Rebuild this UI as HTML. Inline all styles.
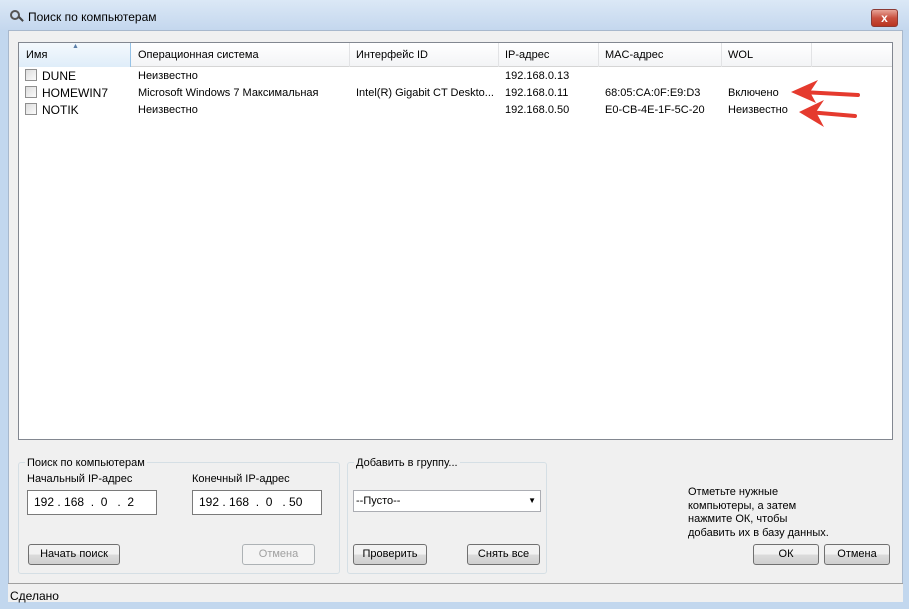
<!DOCTYPE html>
<html><head><meta charset="utf-8"><style>
*{margin:0;padding:0;box-sizing:border-box}
body{width:909px;height:609px;overflow:hidden;background:#c2d7ee;font-family:"Liberation Sans",sans-serif;font-size:11px;color:#000;position:relative}
.a{position:absolute;white-space:nowrap}
.title{left:0;top:0;width:909px;height:30px;background:linear-gradient(#dbe8f6,#c4d7ee)}
.client{left:8px;top:30px;width:895px;height:572px;background:#f0f0f0;border:1px solid #a8b8cc}
.list{left:18px;top:42px;width:875px;height:398px;background:#fff;border:1px solid #828790}
.hdr{left:19px;top:43px;width:873px;height:24px;background:linear-gradient(#fff,#f3f4f6);border-bottom:1px solid #d5d5d5}
.sep{top:43px;width:1px;height:24px;background:#e2e3e5}
.cb{width:12px;height:12px;border:1px solid #8f8f8f;background:linear-gradient(135deg,#ddd,#fbfbfb)}
.btn{height:21px;border:1px solid #707070;border-radius:3px;background:linear-gradient(#f2f2f2 50%,#dcdcdc 50%,#cfcfcf);text-align:center;line-height:19px;font-size:11px}
.grp{border:1px solid #d5dfe5;border-radius:3px}
.lg{background:#f0f0f0;padding:0 2px}
.ip{height:25px;background:#fff;border:1px solid #7a7a7a;font-size:12px;line-height:23px}
</style></head><body>
<div class="a title"></div>
<div class="a" style="left:10px;top:10px;width:10px;height:10px;border:2px solid #555;border-radius:50%"></div>
<div class="a" style="left:18px;top:18px;width:6px;height:2px;background:#444;transform:rotate(45deg)"></div>
<div class="a" style="left:28px;top:10px;font-size:12px">Поиск по компьютерам</div>
<div class="a" style="left:871px;top:9px;width:27px;height:18px;border:1px solid #8c3a34;border-radius:3px;background:linear-gradient(#e8a497,#c9503f 50%,#b93420);color:#fff;font-weight:bold;text-align:center;line-height:16px;font-size:12px">x</div>
<div class="a client"></div>
<div class="a list"></div>
<div class="a hdr"></div>
<div class="a" style="left:19px;top:43px;width:112px;height:24px;background:linear-gradient(#f4f9fd,#dfedf9);border-right:1px solid #96c2e6"></div>
<div class="a" style="left:72px;top:43px;font-size:7px;color:#5a7ea8">▲</div>
<div class="a sep" style="left:349px"></div><div class="a sep" style="left:498px"></div><div class="a sep" style="left:598px"></div><div class="a sep" style="left:721px"></div><div class="a sep" style="left:811px"></div>
<div class="a" style="left:26px;top:49px">Имя</div>
<div class="a" style="left:138px;top:49px">Операционная система</div>
<div class="a" style="left:356px;top:49px">Интерфейс ID</div>
<div class="a" style="left:505px;top:49px">IP-адрес</div>
<div class="a" style="left:605px;top:49px">MAC-адрес</div>
<div class="a" style="left:728px;top:49px">WOL</div>

<div class="a cb" style="left:25px;top:69px"></div><div class="a cb" style="left:25px;top:86px"></div><div class="a cb" style="left:25px;top:103px"></div>
<div class="a" style="left:42px;top:69px;font-size:12px">DUNE</div>
<div class="a" style="left:42px;top:86px;font-size:12px">HOMEWIN7</div>
<div class="a" style="left:42px;top:103px;font-size:12px">NOTIK</div>
<div class="a" style="left:138px;top:70px">Неизвестно</div>
<div class="a" style="left:138px;top:87px">Microsoft Windows 7 Максимальная</div>
<div class="a" style="left:138px;top:104px">Неизвестно</div>
<div class="a" style="left:356px;top:87px">Intel(R) Gigabit CT Deskto...</div>
<div class="a" style="left:505px;top:70px">192.168.0.13</div>
<div class="a" style="left:505px;top:87px">192.168.0.11</div>
<div class="a" style="left:505px;top:104px">192.168.0.50</div>
<div class="a" style="left:605px;top:87px">68:05:CA:0F:E9:D3</div>
<div class="a" style="left:605px;top:104px">E0-CB-4E-1F-5C-20</div>
<div class="a" style="left:728px;top:87px">Включено</div>
<div class="a" style="left:728px;top:104px">Неизвестно</div>
<svg class="a" style="left:780px;top:75px" width="90" height="60">
<path d="M78 20 L22 17" stroke="#e53a2e" stroke-width="4" stroke-linecap="round"/>
<path d="M11 17 L38 5 L30 17 L36 28 Z" fill="#e53a2e"/>
<path d="M75 41 L28 37" stroke="#e53a2e" stroke-width="4" stroke-linecap="round"/>
<path d="M19 37 L44 25 L36 37 L44 52 Z" fill="#e53a2e"/>
</svg>

<div class="a grp" style="left:18px;top:462px;width:322px;height:112px"></div>
<div class="a lg" style="left:25px;top:457px">Поиск по компьютерам</div>
<div class="a" style="left:27px;top:473px">Начальный IP-адрес</div>
<div class="a" style="left:192px;top:473px">Конечный IP-адрес</div>
<div class="a ip" style="left:27px;top:490px;width:130px;padding-left:6px">192 . 168 &nbsp;. &nbsp;0 &nbsp;&nbsp;. &nbsp;2</div>
<div class="a ip" style="left:192px;top:490px;width:130px;padding-left:6px">192 . 168 &nbsp;. &nbsp;0 &nbsp;&nbsp;. 50</div>
<div class="a btn" style="left:28px;top:544px;width:92px">Начать поиск</div>
<div class="a btn" style="left:242px;top:544px;width:73px;border-color:#adb2b5;background:#f4f4f4;color:#a0a0a0">Отмена</div>

<div class="a grp" style="left:347px;top:462px;width:200px;height:112px"></div>
<div class="a lg" style="left:354px;top:457px">Добавить в группу...</div>
<div class="a" style="left:353px;top:490px;width:188px;height:22px;background:#fff;border:1px solid #abadb3;line-height:20px;padding-left:2px">--Пусто--<span style="position:absolute;right:4px;top:0;font-size:8px">▼</span></div>
<div class="a btn" style="left:353px;top:544px;width:74px">Проверить</div>
<div class="a btn" style="left:467px;top:544px;width:73px">Снять все</div>

<div class="a" style="left:688px;top:486px;line-height:13.5px">Отметьте нужные<br>компьютеры, а затем<br>нажмите ОК, чтобы<br>добавить их в базу данных.</div>
<div class="a btn" style="left:753px;top:544px;width:66px">ОК</div>
<div class="a btn" style="left:824px;top:544px;width:66px">Отмена</div>

<div class="a" style="left:8px;top:583px;width:895px;height:1px;background:#a0a0a0"></div>
<div class="a" style="left:8px;top:584px;width:895px;height:18px;background:#f0f0f0"></div>
<div class="a" style="left:10px;top:589px;font-size:12px">Сделано</div>
</body></html>
